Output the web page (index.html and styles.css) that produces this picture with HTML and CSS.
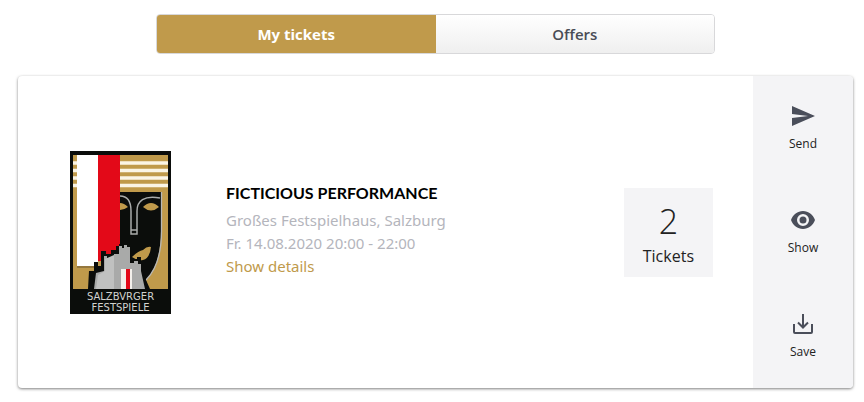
FILE: index.html
```html
<!DOCTYPE html>
<html lang="en">
<head>
<meta charset="utf-8">
<meta name="viewport" content="width=device-width, initial-scale=1">
<title>My tickets</title>
<link rel="stylesheet" href="styles.css">
</head>
<body>
<main class="page">
  <nav class="tabs">
    <button class="tab tab-active" type="button">My tickets</button>
    <button class="tab" type="button">Offers</button>
  </nav>
  <article class="card">
    <div class="content">
      <svg class="poster" viewBox="0 0 101 163" role="img" aria-label="Salzburger Festspiele">
        <rect width="101" height="163" fill="#0b0d0b"/>
        <rect x="3" y="4" width="95" height="134" fill="#c09a4b"/>
        <path d="M3 12H98M3 19.500H98M3 27H98M3 34.500H98" stroke="#fbf5e6" stroke-width="3.400"/>
        <path d="M50 41H91V80C91 101 86 119 76 129L80 138H50Z" fill="#0b0d0b"/>
        <path d="M91.500 41V80C91.500 102 86 119 76 129" fill="none" stroke="#b8b8b5" stroke-width="1.300"/>
        <path d="M50 45C58 45 61 51 61 60V83H67V60C67 50 74 44 90 47M61 79H67" fill="none" stroke="#aaacab" stroke-width="1.500"/>
        <path d="M50 52Q54 52 58 56Q54 59 50 59ZM73 56Q81 48 89 56Q81 63 73 56Z" fill="#c09a4b"/>
        <path d="M62 106Q68 100 73 99Q77 95 81 96Q80 107 73 109Q67 110 62 106Z" fill="#c09a4b"/>
        <rect x="7" y="4" width="21" height="111" fill="#fff"/>
        <rect x="28" y="4" width="22" height="106" fill="#e30918"/>
        <path d="M7 116H24" stroke="#6b5733" stroke-width="1"/>
        <path d="M18 138L19 120H24V111H28V115H31V100H36V103H41V99H46V95H49V93H62V108H67V106H71V111H74V121L78 138Z" fill="#0b0d0b"/>
        <path d="M24 138L26 122L34 120V105H37V107H44V103H49V95H52V97H54V94H57V96H60V112H64V110H68V113H71V120L75 138Z" fill="#a9aaa9"/>
        <path d="M35 108L44 104V138H26L28 124L35 120Z" fill="#c0c1c0"/>
        <path d="M51 118H56V138H51ZM60 118H62V138H60Z" fill="#f3f0eb"/>
        <rect x="56" y="118" width="4" height="20" fill="#e30918"/>
        <g class="poster-text" text-anchor="middle">
          <text x="50.500" y="149">SALZBVRGER</text>
          <text x="50.500" y="160">FESTSPIELE</text>
        </g>
      </svg>
      <section class="details">
        <h1>FICTICIOUS PERFORMANCE</h1>
        <p>Großes Festspielhaus, Salzburg</p>
        <p>Fr. 14.08.2020 20:00 - 22:00</p>
        <a href="#details">Show details</a>
      </section>
      <div class="count"><span class="number">2</span><span>Tickets</span></div>
    </div>
    <aside class="actions">
      <button class="action" type="button">
        <svg viewBox="0 0 24 24"><path d="M1 2L24 12L1 22V14L17 12L1 10Z" fill="currentColor"/></svg>
        <span>Send</span>
      </button>
      <button class="action" type="button">
        <svg viewBox="0 0 24 24"><path fill="currentColor" fill-rule="evenodd" d="M12 3C6.500 3 2 6.500 0 12c2 5.500 6.500 9 12 9s10-3.500 12-9C22 6.500 17.500 3 12 3zM12 18a6 6 0 1 1 0-12 6 6 0 0 1 0 12zM12 8.500a3.500 3.500 0 1 0 0 7 3.500 3.500 0 0 0 0-7z"/></svg>
        <span>Show</span>
      </button>
      <button class="action" type="button">
        <svg viewBox="0 0 24 24"><path fill="none" stroke="currentColor" stroke-width="2" d="M3 12V20Q3 21 4 21H20Q21 21 21 20V12M12 2V15M7 10.500L12 15.500L17 10.500"/></svg>
        <span>Save</span>
      </button>
    </aside>
  </article>
</main>
</body>
</html>
```
FILE: styles.css
```css
* { box-sizing: border-box; }
body {
  margin: 0;
  background: #fff;
  font-family: "Open Sans", "Noto Sans", sans-serif;
  color: #222;
}
.page { padding: 14px 11px 13px 18px; }
.tabs {
  display: flex;
  width: 67%;
  margin: 0 auto 22px;
  border: 1px solid #d8d8da;
  border-radius: 4px;
  overflow: hidden;
}
.tab {
  flex: 1;
  padding: 8px;
  border: 0;
  background: linear-gradient(#fff, #efefef);
  color: #494c55;
  font: 600 15px/22px "Open Sans", sans-serif;
}
.tab-active {
  background: #c09a4b;
  color: #fff;
  font-weight: 700;
}
.card {
  display: flex;
  border-radius: 4px;
  overflow: hidden;
  box-shadow: 0 1px 3px rgba(0, 0, 0, 0.5);
}
.content {
  flex: 1;
  display: flex;
  align-items: center;
  padding: 0 40px 0 52px;
}
.poster { width: 101px; height: 163px; flex: none; }
.poster-text { font-family: "DejaVu Sans", sans-serif; font-size: 10px; fill: #d2d2d0; }
.details {
  flex: 1;
  padding: 0 0 6px 55px;
  font-family: "Noto Sans", sans-serif;
  font-size: 15px;
  line-height: 23px;
  color: #b4b5bc;
}
.details h1 {
  margin: 0 0 4px;
  font: 700 16px/24px Lato, sans-serif;
  color: #000;
}
.details p { margin: 0; }
.details a { color: #c09a4b; text-decoration: none; }
.count {
  display: flex;
  flex-direction: column;
  align-items: center;
  padding: 9px 19px;
  background: #f4f4f6;
  font-size: 16px;
  line-height: 23px;
}
.number {
  font-size: 34px;
  line-height: 48px;
  font-weight: 300;
}
.actions {
  display: flex;
  flex-direction: column;
  width: 100px;
  background: #f4f4f6;
}
.action {
  display: flex;
  flex-direction: column;
  align-items: center;
  gap: 8px;
  padding: 28px 0;
  border: 0;
  background: none;
  color: #222;
  font: 12px/16px "Open Sans", sans-serif;
}
.action svg { width: 24px; height: 24px; color: #4a4e5a; }
```
